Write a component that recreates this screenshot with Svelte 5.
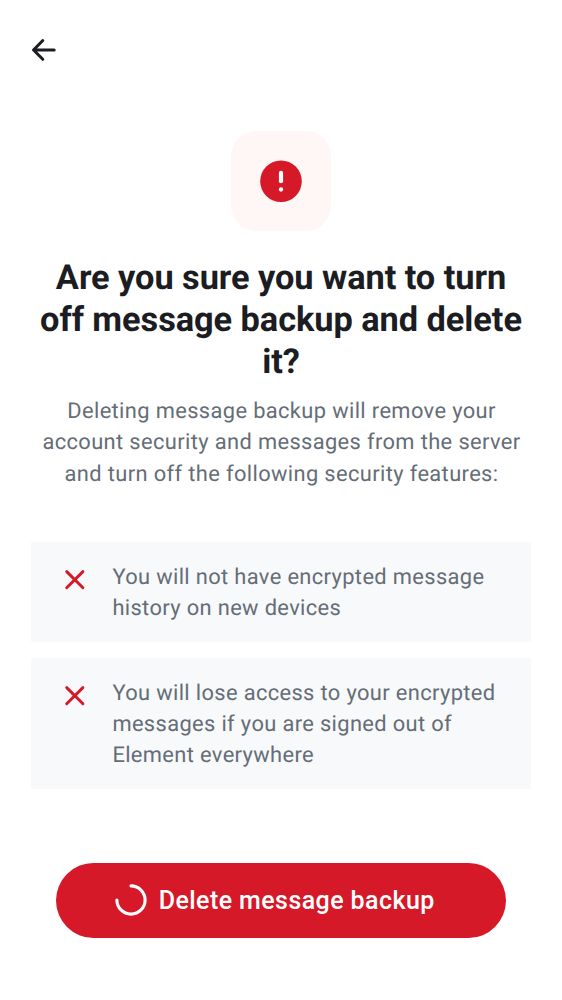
<script>
  const features = [
    ['You will not have encrypted message', 'history on new devices'],
    ['You will lose access to your encrypted', 'messages if you are signed out of', 'Element everywhere']
  ];
</script>

<div class="screen">
  <header>
    <button class="back" aria-label="Back">
      <svg width="26" height="26" viewBox="0 0 26 26" fill="none" stroke="#1b1d22" stroke-width="3" stroke-linecap="round" stroke-linejoin="round"><path d="M11.8 3.5 2.5 13l9.3 9.3M2.8 13h20.4" /></svg>
    </button>
  </header>
  <main>
    <div class="badge">
      <svg width="42" height="42" viewBox="0 0 42 42"><circle cx="21" cy="21.2" r="20.8" fill="#d51928" /><path d="M21 12.9v8.3" stroke="#fff" stroke-width="4.2" stroke-linecap="round" /><circle cx="21" cy="29.5" r="2.15" fill="#fff" /></svg>
    </div>
    <h1>Are you sure you want to turn<br />off message backup and delete<br />it?</h1>
    <p class="lead">Deleting message backup will remove your<br />account security and messages from the server<br />and turn off the following security features:</p>
    <ul>
      {#each features as lines}
        <li>
          <svg width="22" height="22" viewBox="0 0 22 22" fill="none" stroke="#d51928" stroke-width="2.9" stroke-linecap="round"><path d="m2.7 2.6 16.2 16.2M18.9 2.6 2.7 18.8" /></svg>
          <div>{#each lines as line}<span>{line}</span>{/each}</div>
        </li>
      {/each}
    </ul>
  </main>
  <button class="delete">
    <svg width="32" height="32" viewBox="0 0 32 32" fill="none" stroke="#fff" stroke-width="3.1"><path d="M16 1.9A14.1 14.1 0 1 1 1.9 16" stroke-linecap="round" /></svg>
    <span>Delete message backup</span>
  </button>
</div>

<style>
  :global(body) { margin: 0; background: #fff; }
  .screen { box-sizing: border-box; width: 562px; height: 1000px; padding: 37px 31px 0; font-family: Roboto, sans-serif; color: #1b1d22; overflow: hidden; text-rendering: geometricPrecision; }
  header { height: 94px; }
  button { border: 0; padding: 0; font: inherit; }
  .back { display: block; width: 26px; height: 26px; background: none; }
  svg { display: block; flex: none; }
  .badge { width: 100px; height: 100px; margin: 0 auto; border-radius: 25px; background: #fff7f6; display: grid; place-items: center; }
  h1 { margin: 26px 0 0; font-size: 34.375px; line-height: 42.2px; letter-spacing: -.06px; font-weight: 700; text-align: center; white-space: nowrap; }
  .lead { margin: 12.4px 0 0; padding-left: 1px; font-size: 21.875px; line-height: 31.25px; letter-spacing: .37px; color: #656d77; text-align: center; white-space: nowrap; }
  ul { list-style: none; margin: 52.25px 0 0; padding: 0; display: flex; flex-direction: column; gap: 16px; }
  li { display: flex; gap: 26.4px; padding: 20px 0 17.5px 33px; background: #f7f9fb; color: #656d77; font-size: 21.875px; line-height: 31.2px; letter-spacing: .36px; white-space: nowrap; }
  li svg { margin-top: 7px; }
  li span { display: block; }
  .delete { box-sizing: border-box; display: flex; align-items: center; justify-content: center; gap: 12px; width: 450px; height: 75px; margin: 73.9px auto 0; padding-right: 12.5px; border-radius: 38px; background: #d51928; color: #fff; font-size: 25px; font-weight: 500; letter-spacing: .42px; }
</style>
